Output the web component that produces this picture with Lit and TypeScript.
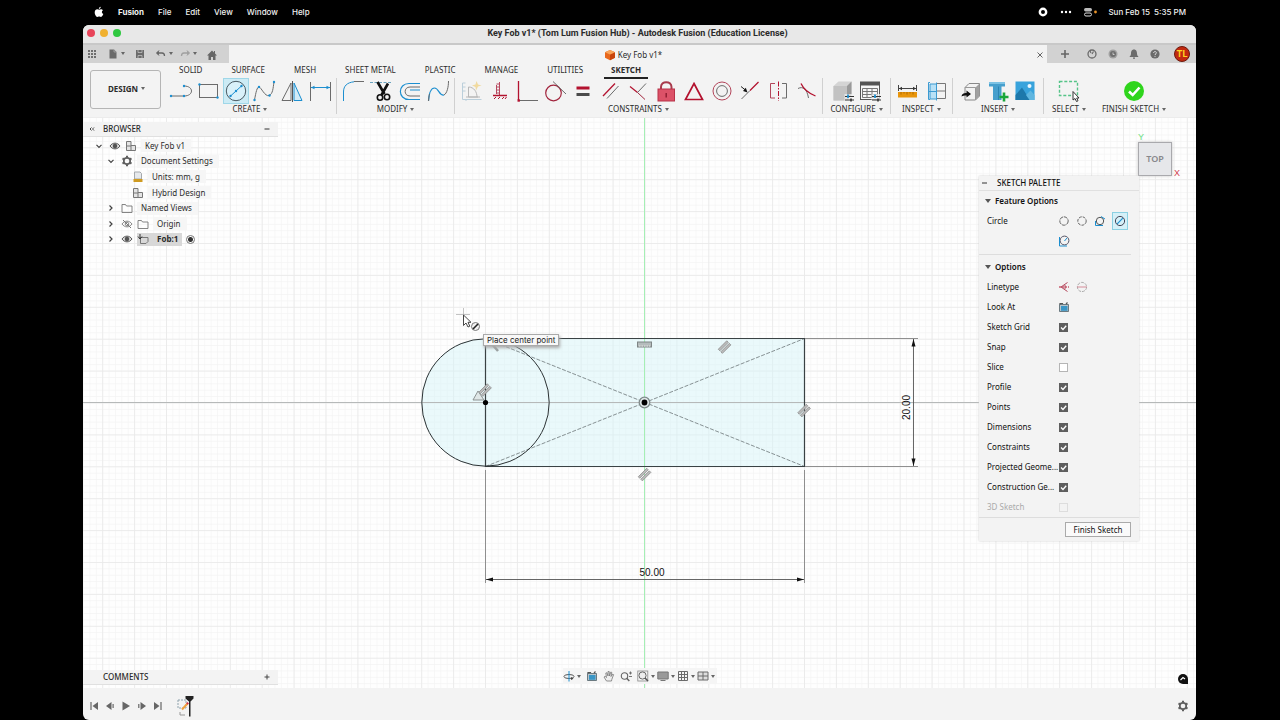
import { LitElement, html, svg, css, nothing } from "lit";
import { customElement, state } from "lit/decorators.js";
import { classMap } from "lit/directives/class-map.js";

const B = "#1c8fd0";
const G = "#6b6b6b";
const R = "#b3122f";

const dot = (x: number, y: number, c = B) => svg`<circle cx=${x} cy=${y} r="1.2" fill=${c}/>`;

const glyphs: Record<string, unknown> = {
  line: svg`<path d="M4 18H17C27 18 27 8 17 8" stroke=${G}/>${dot(4, 18)}${dot(17, 18)}${dot(17, 8)}`,
  rect: svg`<rect x="4.500" y="6.500" width="18" height="13" stroke=${G}/>${dot(4.5, 6.5)}${dot(22.5, 19.5)}`,
  circle: svg`<circle cx="13" cy="13" r="9.700" stroke="#4a5a63" fill="#d9f1fa"/><path d="M7 18.500L19 7.500" stroke=${B}/>${dot(7.5, 18)}${dot(13, 13)}${dot(18.5, 8)}`,
  spline: svg`<path d="M3.500 22C5 14 6 9 8 9S14 19 18 17.500S22 10 23 4" stroke=${G}/>${dot(3.5, 22)}${dot(8, 9)}${dot(18.5, 17.5)}${dot(23, 4)}`,
  mirror: svg`<path d="M12 5V22.500H3Z" stroke=${G}/><path d="M15 5V22.500H23Z" stroke=${B} fill="#d3ecf8"/><path d="M13.500 3V24" stroke="#555"/>`,
  dimension: svg`<path d="M3.500 4V23M23.500 4V23" stroke=${G}/><path d="M4 9.500H23" stroke=${B}/><path d="M4 9.500l3.500-1.800v3.600zM23 9.500l-3.500-1.800v3.600z" fill=${B}/>`,
  fillet: svg`<path d="M3.500 23V14C3.500 8 7 4.500 14 3.800" stroke=${B}/><path d="M14 3.500H24" stroke=${G}/>`,
  trim: svg`<path d="M2 4.500H24" stroke="#6aa3bf" stroke-dasharray="3 1.500"/><path d="M9.500 4L16.500 16M20 5.500L13.500 17" stroke="#111" stroke-width="2.600"/><circle cx="12" cy="19.500" r="2.700" stroke="#111" stroke-width="1.600"/><circle cx="19" cy="19" r="2.700" stroke="#111" stroke-width="1.600"/>`,
  offset: svg`<path d="M23 5.500H12C0.500 5.500 0.500 21.500 12 21.500H23M23 12H13" stroke=${B} stroke-width="1.200"/><path d="M23 9H13C6.500 9 6.500 18 13 18H23" stroke=${G}/>`,
  blend: svg`<path d="M3.500 23C4 16 6 10 9.500 10C14 10 14 18 19 17" stroke=${B} stroke-width="1.200"/><path d="M3.500 23C3.700 20 4 18 4.500 16M19 17C22 15.500 23.500 9 23.500 3" stroke=${G}/>`,
  autoc: svg`<g opacity=".55"><path d="M4.500 5V21.500H23.500M4.500 5h3M4.500 9h3M4.500 13h3M8 21v2" stroke="#8fb3c8"/><path d="M10.500 9V19H20M10.500 9C16 9 19 14 19 19M8 19h14" stroke="#888"/><path d="M18.500 3l1.500 3.500 3.500 1-3.500 1-2 4-.5-3.600-3.500-1.400 3.500-1z" fill="#f0c75b"/></g>`,
  fixhv: svg`<path d="M13.500 4V17M10.500 7v9M10.500 6h3M10.500 9h3M10.500 12h3M10.500 15h3" stroke="#b84a60"/><path d="M7 17.500H21" stroke=${R} stroke-width="1.600"/><path d="M8 21l2-2M12 21l2-2M16 21l2-2M19 21l1.500-2" stroke=${R}/>`,
  perp: svg`<path d="M4.500 3V22" stroke=${R} stroke-width="1.300"/><path d="M5 22.500H24" stroke=${G}/><rect x="3.500" y="21.300" width="2.400" height="2.400" fill=${R}/>`,
  tangent: svg`<circle cx="11.500" cy="15" r="7.800" stroke="#a2263e" stroke-width="1.200"/><path d="M11 3.500L24 16" stroke=${G}/>`,
  equal: svg`<rect x="6.500" y="8.500" width="13" height="3" fill=${R}/><rect x="6.500" y="15" width="13" height="3" fill="#4b4b4b"/>`,
  parallel: svg`<path d="M9 20.500L20.500 8" stroke=${G}/><path d="M5 18L17 5.500" stroke=${R} stroke-width="1.300"/>`,
  midpt: svg`<path d="M5 8.500L12.500 14.500" stroke=${R} stroke-width="1.200"/><path d="M12.500 14.500L20 21.500" stroke="#a2263e"/><path d="M21 5.500L12.500 14.500" stroke=${G}/>`,
  lock: svg`<path d="M8 12V9C8 2.500 18.500 2.500 18.500 9V12" stroke="#a83a4c" stroke-width="2"/><rect x="5" y="11" width="16.500" height="12" fill="#dc5268" stroke="#b83248"/><path d="M13.200 15v4.500" stroke="#8d1b2f" stroke-width="1.400"/>`,
  tri: svg`<path d="M13 5.500L21.500 21.500H4.500Z" stroke=${R} stroke-width="1.700"/>`,
  concentric: svg`<circle cx="13" cy="13" r="9" stroke="#b3455a"/><circle cx="13" cy="13" r="5.400" stroke=${G}/>`,
  collinear: svg`<path d="M4.500 21L13 12.500" stroke=${G}/><path d="M13 12.500L21.500 4" stroke=${R} stroke-width="1.200"/><path d="M4 8.500l5 4" stroke="#222"/><path d="M10.500 14.500l-4.500-1.500 2.800-3.200z" fill="#111"/>`,
  symmetry: svg`<path d="M10 5.500H5.500V20H10" stroke="#b3455a"/><path d="M17 5.500H21.500V20H17" stroke=${G}/><path d="M13.500 3.500V23" stroke=${R} stroke-dasharray="5 1.500 1.500 1.500"/>`,
  curvature: svg`<path d="M5 10.500C10 8 14 11 15.500 20" stroke=${G}/><path d="M8 5.500C11 12 15 15 22.500 18" stroke=${R} stroke-width="1.300"/>`,
  config: svg`<path d="M3.500 8L8.500 3.500H21.500V17L17 22.500H3.500Z" fill="#d4d4d4"/><path d="M3.500 8H17V22.500H3.500Z" fill="#c2c2c2"/><path d="M17 8L21.500 3.500V17L17 22.500Z" fill="#9a9a9a"/><rect x="14.500" y="16" width="10" height="8" fill="#f3f3f3" fill-opacity=".7"/><path d="M15 18.500h9M15 22h9" stroke="#333"/><path d="M18 16.500v3.500" stroke=${B} stroke-width="1.800"/><path d="M21 20.500v3" stroke="#333" stroke-width="1.600"/>`,
  table: svg`<rect x="3.500" y="4.500" width="19" height="17" stroke="#555" fill="#f7f7f7"/><rect x="3" y="3.500" width="20" height="4" fill="#555"/><path d="M5.500 10.500H20.500V19.500H5.500zM5.500 13.500H20.500M5.500 16.500H20.500M10 10.500v9M15 10.500v9" stroke="#777"/><rect x="14.500" y="16" width="10" height="8" fill="#f3f3f3" fill-opacity=".7"/><path d="M15 18.500h9M15 22h9" stroke="#333"/><path d="M18 16.500v3.500" stroke=${B} stroke-width="1.800"/><path d="M21 20.500v3" stroke="#333" stroke-width="1.600"/>`,
  measure: svg`<path d="M4.500 7v6M22.500 7v6M5 10.500H22" stroke="#444"/><path d="M5 10.500l3-1.800v3.600zM22 10.500l-3-1.800v3.600z" fill="#333"/><rect x="4" y="14" width="19" height="5.500" fill="#e8950c"/><path d="M7 14v2.500M10 14v1.500M13 14v2.500M16 14v1.500M19 14v2.500" stroke="#a25f00" stroke-width=".8"/>`,
  interfer: svg`<rect x="7" y="6" width="7" height="15" fill="#b9e1f6"/><path d="M7 4.500H5.500V21.500H7M13.500 4.500v18M5.500 13.500H14M14 6H7v15h7" stroke="#3c9bd2"/><path d="M14 5.500H22.500V20.500H14M14 13H22.500" stroke="#777"/>`,
  insert: svg`<path d="M7 9.500L11 5.500H21.500V18L17.500 22H7Z" fill="#f2f2f2" stroke="#888"/><path d="M17.500 9.500L21.500 5.500V18L17.500 22Z" fill="#a0a0a0"/><path d="M7 9.500H17.500V22" stroke="#999"/><path d="M3.500 18.500C4 15.500 6 15 8.500 15V12.500L13 16 8.500 19.500V17.500C6 17.500 5 17.500 3.500 18.500Z" fill="#111"/>`,
  mcm: svg`<path d="M4 4H20V8.500H16.500V22H8V8.500H4Z" fill="#469fcd"/><path d="M4 4H20V6H4z" fill="#7cc2e4"/><path d="M13.500 8.500V22" stroke="#2c84b2"/><path d="M19 14.500v9M14.500 19h9" stroke="#18a63b" stroke-width="2.600"/>`,
  image: svg`<rect x="3.500" y="3.500" width="19" height="18.500" fill="#38a3dc"/><path d="M3.500 17L10 9.500L18 22H3.500Z" fill="#1d78ab"/><path d="M14 17L18.500 12.500L22.500 17V22H17.500Z" fill="#5fb6e0"/><circle cx="17.500" cy="8" r="2" fill="#e9f7ff"/>`,
  select: svg`<rect x="3.500" y="3.500" width="18" height="14" stroke="#55c488" stroke-width="1.400" stroke-dasharray="3 1.800"/><path d="M17 13.500V22L19 20.500L20.500 23.500L22 22.800L20.700 20H23Z" fill="#fff" stroke="#333"/>`,
  finish: svg`<circle cx="13" cy="13" r="10" fill="#2fd51c"/><path d="M8 13.500L11.700 17L18.500 9.500" stroke="#fff" stroke-width="2.600"/>`,
};

const tool = (n: string) => svg`<svg class="tool" viewBox="0 0 26 26" fill="none" aria-hidden="true">${glyphs[n]}</svg>`;

const small: Record<string, unknown> = {
  grid: svg`<path d="M2 2h2v2H2zM5 2h2v2H5zM8 2h2v2H8zM2 5h2v2H2zM5 5h2v2H5zM8 5h2v2H8zM2 8h2v2H2zM5 8h2v2H5zM8 8h2v2H8z" fill="#6e6e6e"/>`,
  file: svg`<path d="M2.500 1.500H7L9.500 4V10.500H2.500Z" fill="#6b6b6b"/><path d="M7 1.500V4H9.500" stroke="#bbb" stroke-width=".6"/>`,
  save: svg`<path d="M2 2H10V10H2Z" fill="#6b6b6b"/><path d="M4 2v2.500h4V2M4 10V7.500h4V10" stroke="#ccc" stroke-width=".7"/>`,
  undo: svg`<path d="M4 2.500L1.500 5L4 7.500" fill="#777" stroke="#666"/><path d="M2 5H7C9 5 9.500 6.500 9.500 8" stroke="#666" stroke-width="1.300"/>`,
  redo: svg`<path d="M8 2.500L10.500 5L8 7.500" fill="#a5a5a5" stroke="#a0a0a0"/><path d="M10 5H5C3 5 2.500 6.500 2.500 8" stroke="#a0a0a0" stroke-width="1.300"/>`,
  home: svg`<path d="M6 2.500L1 7.500H2.500V12H5V9H7V12H9.500V7.500H11L9 5.500V3H8V4.500Z" fill="#666"/>`,
  ext: svg`<circle cx="6" cy="6" r="4" stroke="#6b6b6b" stroke-width="1.300"/><path d="M6 6L7.500 3.500M4 3l1 2" stroke="#6b6b6b" stroke-width="1.200"/>`,
  job: svg`<circle cx="6" cy="6" r="4.500" fill="#a0a0a0"/><circle cx="6" cy="6" r="3" fill="#6f6f6f"/><path d="M6 4.500V6.500H7.500" stroke="#ddd" stroke-width=".8"/>`,
  bell: svg`<path d="M6 1.500C8.500 1.500 9 4 9 5.500C9 7.500 10 8 10.500 9H1.500C2 8 3 7.500 3 5.500C3 4 3.500 1.500 6 1.500ZM5 9.500H7V10.800H5Z" fill="#6b6b6b"/>`,
  help: svg`<circle cx="6" cy="6" r="4.600" fill="#6b6b6b"/><path d="M4.600 5C4.600 3 7.500 3.200 7.400 4.900C7.300 5.900 6 5.900 6 7M6 7.900V8.900" stroke="#ddd" stroke-width="1"/>`,
  cube: svg`<path d="M6 1L11 3.200V8.800L6 11.200L1 8.800V3.200Z" fill="#e8681c"/><path d="M6 5.500L11 3.200V8.800L6 11.200Z" fill="#c8450c"/><path d="M6 1L11 3.200L6 5.500L1 3.200Z" fill="#f8a45a"/>`,
  eye: svg`<path d="M1 6C3.500 2.200 8.500 2.200 11 6C8.500 9.800 3.500 9.800 1 6Z" stroke="#555" fill="#ddd"/><circle cx="6" cy="6" r="2.300" fill="#555"/>`,
  eyeoff: svg`<path d="M1 6C3.500 2.200 8.500 2.200 11 6C8.500 9.800 3.500 9.800 1 6Z" stroke="#888"/><circle cx="6" cy="6" r="1.800" stroke="#888"/><path d="M2 2L10 10" stroke="#777"/>`,
  comp: svg`<path d="M1.500 1.500H6V10.500H1.500ZM1.500 6H6M6 5.500H10.500V10.500H6" stroke="#777" fill="#e4e4e4"/>`,
  gear: svg`<circle cx="6" cy="6" r="3.200" stroke="#5f5f5f" stroke-width="1.700"/><path d="M6 .8V2.600M6 9.400V11.200M1.500 3.400L3 4.300M9 7.700L10.500 8.600M1.500 8.600L3 7.700M9 4.300L10.500 3.400" stroke="#5f5f5f" stroke-width="2"/>`,
  units: svg`<path d="M2.500 1H8L9.500 2.500V8H2.500Z" fill="#e6e9ec" stroke="#a5a9ad"/><rect x="1.500" y="8" width="9" height="3" fill="#cf9b22"/>`,
  folder: svg`<path d="M1 2.500H4.500L5.500 4H11V10.500H1Z" stroke="#777" stroke-width=".9"/>`,
  body: svg`<path d="M3.500 4.500H11V8.500L9 10.500H3.500Z" stroke="#777"/><path d="M3 1V6M1 3.500L3 6L5 3.500" stroke="#333"/>`,
  right: svg`<path d="M4.500 3.500L7 6L4.500 8.500" stroke="#444" stroke-width="1.200"/>`,
  down: svg`<path d="M3.500 4.800L6 7.300L8.500 4.800" stroke="#444" stroke-width="1.200"/>`,
  c1: svg`<circle cx="6" cy="6" r="4.200" stroke="#666" stroke-dasharray="4 .8"/>`,
  c2: svg`<circle cx="6" cy="6" r="4.200" stroke="#666" stroke-dasharray="3 1"/>`,
  c3: svg`<circle cx="6" cy="6" r="3.700" stroke="#555"/><path d="M1.500 6V10.500H9M7 1.500L11 4" stroke=${B}/>`,
  c4: svg`<circle cx="6" cy="6" r="4.600" stroke="#445" fill="#d5f0f8"/><path d="M3.200 8.800L8.800 3.200" stroke=${B} stroke-width="1.200"/>`,
  c5: svg`<circle cx="6.500" cy="5.500" r="4.400" stroke="#556"/><path d="M1.500 2V11H9M6.500 6L9 3" stroke=${B}/>`,
  lt1: svg`<path d="M1 6H11" stroke=${R} stroke-dasharray="2 1"/><path d="M9.500 1.500L3 6L9.500 10.500M7 4v4" stroke="#b3455a"/>`,
  lt2: svg`<circle cx="6" cy="6" r="4.600" stroke="#aaa" stroke-dasharray="3 1"/><path d="M1 6H11" stroke="#d58c99"/>`,
  look: svg`<path d="M1.500 3.500H10.500V10.500H1.500Z" fill="#b9c4ca" stroke="#5f6e76" stroke-width=".9"/><rect x="3" y="5" width="6.500" height="4.800" fill="#3a96c6"/><path d="M2 3.500V2.500H4.500V3M8 3L9.500 1.500" stroke="#555" stroke-width="1.200"/>`,
  orbit: svg`<ellipse cx="6" cy="6.500" rx="5" ry="2" stroke="#555"/><path d="M6 1V11.500" stroke=${B}/><path d="M8 7l2.500 1.800L8 10z" fill="#444"/>`,
  hand: svg`<path d="M3.500 11L1 7L2.200 6.300L3.500 7.500L2.800 3L3.800 2.700L5 6L5 1.500L6.200 1.500L6.500 6L7.800 2L8.800 2.400L8 6.500L9.800 4L10.600 4.600L8.800 9.500L8.500 11Z" fill="#eee" stroke="#777" stroke-width=".8"/>`,
  zoom: svg`<circle cx="4.500" cy="6" r="3.200" stroke="#666" stroke-width="1.100"/><path d="M6.700 8.200L9.300 11" stroke="#666" stroke-width="1.500"/><path d="M9 3h3M10.500 1.500v3M9 6.500h3" stroke="#666" stroke-width=".9"/>`,
  fit: svg`<rect x=".8" y="1" width="10" height="10" stroke="#888" stroke-width=".8"/><circle cx="5.500" cy="5.500" r="3.600" stroke="#666" fill="#eee"/><path d="M8 8L11 11" stroke="#555" stroke-width="1.500"/>`,
  display: svg`<path d="M.8 2H11.200V9H.8Z" fill="#9a9a9a" stroke="#777"/><path d="M3.500 10.500h5" stroke="#777"/>`,
  gridv: svg`<path d="M1.500 1.500h9v9h-9zM4.500 1.500v9M7.500 1.500v9M1.500 4.500h9M1.500 7.500h9" stroke="#6b6b6b"/>`,
  views: svg`<path d="M1 2h10v8H1zM6 2v8M1 6h10" stroke="#6b6b6b" fill="#ddd"/>`,
  first: svg`<path d="M3 2v8" stroke="#666" stroke-width="1.200"/><path d="M10 2v8L4.500 6z" fill="#666"/>`,
  prev: svg`<path d="M7.500 2v8L2 6zM8.500 4h1.200v4H8.500z" fill="#666"/>`,
  play: svg`<path d="M2.500 1.500L10 6l-7.500 4.500z" fill="#666"/>`,
  next: svg`<path d="M4.500 2v8L10 6zM2.200 4h1.200v4H2.200z" fill="#666"/>`,
  last: svg`<path d="M9 2v8" stroke="#666" stroke-width="1.200"/><path d="M2 2v8L7.500 6z" fill="#666"/>`,
  close: svg`<path d="M3.500 3.500L8.500 8.500M8.500 3.500L3.500 8.500" stroke="#555" stroke-width=".9"/>`,
  plus: svg`<path d="M6 2v8M2 6h8" stroke="#666" stroke-width="1.600"/>`,
};

const ico = (n: string) => svg`<svg class="ico" viewBox="0 0 12 12" fill="none" aria-hidden="true">${small[n]}</svg>`;

interface Group { id: string; label: string; tools: string[]; active?: string }

const groups: Group[] = [
  { id: "create", label: "CREATE", tools: ["line", "rect", "circle", "spline", "mirror", "dimension"], active: "circle" },
  { id: "modify", label: "MODIFY", tools: ["fillet", "trim", "offset", "blend"] },
  { id: "constraints", label: "CONSTRAINTS", tools: ["autoc", "fixhv", "perp", "tangent", "equal", "parallel", "midpt", "lock", "tri", "concentric", "collinear", "symmetry", "curvature"] },
  { id: "configure", label: "CONFIGURE", tools: ["config", "table"] },
  { id: "inspect", label: "INSPECT", tools: ["measure", "interfer"] },
  { id: "insert", label: "INSERT", tools: ["insert", "mcm", "image"] },
  { id: "select", label: "SELECT", tools: ["select"] },
  { id: "finish", label: "FINISH SKETCH", tools: ["finish"] },
];

const tabs = ["SOLID", "SURFACE", "MESH", "SHEET METAL", "PLASTIC", "MANAGE", "UTILITIES", "SKETCH"];

const tree = [
  { depth: 0, icons: ["down", "eye", "comp"], text: "Key Fob v1" },
  { depth: 1, icons: ["down", "gear"], text: "Document Settings" },
  { depth: 3, icons: ["units"], text: "Units: mm, g" },
  { depth: 3, icons: ["comp"], text: "Hybrid Design" },
  { depth: 1, icons: ["right", "folder"], text: "Named Views" },
  { depth: 1, icons: ["right", "eyeoff", "folder"], text: "Origin" },
  { depth: 1, icons: ["right", "eye"], text: "Fob:1", active: true },
];

@customElement("app-root")
export class AppRoot extends LitElement {
  @state() private options = [
    { label: "Sketch Grid", on: true },
    { label: "Snap", on: true },
    { label: "Slice", on: false },
    { label: "Profile", on: true },
    { label: "Points", on: true },
    { label: "Dimensions", on: true },
    { label: "Constraints", on: true },
    { label: "Projected Geome...", on: true },
    { label: "Construction Ge...", on: true },
    { label: "3D Sketch", on: false, disabled: true },
  ];

  static styles = css`
    :host { display: flex; flex-direction: column; height: 100vh; padding: 0 84px 0 83px; box-sizing: border-box; background: #000; color: #2b2b2b; font: 8px/12px "Noto Sans", sans-serif; }
    * { box-sizing: border-box; }
    button { font: inherit; color: inherit; background: none; border: 0; padding: 0; display: inline-flex; align-items: center; justify-content: center; }
    ul { list-style: none; margin: 0; padding: 0; }
    .ico { width: 12px; height: 12px; flex: none; display: block; }
    .tool { width: 26px; height: 26px; display: block; }
    .caret { width: 0; border: 2px solid transparent; border-top: 3px solid #666; border-bottom: 0; flex: none; margin-left: 3px; }
    .menubar { display: flex; align-items: center; height: 25px; flex: none; padding: 0 10px 2px 11px; color: #f2f2f2; font: 500 8px/12px Inter, sans-serif; }
    .menubar nav { display: flex; gap: 14px; flex: 1; align-items: center; }
    .menubar button { font-weight: 500; }
    .menubar .app { font-weight: 700; }
    .apple { width: 10px; height: 12px; display: block; }
    .status { display: flex; align-items: center; gap: 8px; }
    .window { flex: 1; min-height: 0; display: flex; flex-direction: column; background: #f3f3f3; border-radius: 6px; overflow: hidden; }
    .title { display: flex; align-items: center; height: 18px; flex: none; background: #e8e8e8; padding: 0 4px 2px; }
    .title h1 { flex: 1; margin: 0; text-align: center; padding-right: 38px; font: 700 9px/14px Roboto, sans-serif; color: #2b2b2b; }
    .lights { display: flex; gap: 5px; }
    .light { width: 8px; height: 8px; border-radius: 50%; }
    .red { background: #e8455a; } .amber { background: #f0b02f; } .green { background: #2fc840; }
    .tabbar { display: flex; height: 20px; flex: none; background: #d2d2d2; border-top: 2px solid #c8c8c8; }
    .quick { width: 146px; display: flex; align-items: center; padding-left: 3px; }
    .quick button { margin-right: 9px; }
    .quick .tight { margin-right: 6px; }
    .quick, .tray { padding-bottom: 1px; }
    .doc { flex: 1; display: flex; align-items: center; justify-content: center; background: #f3f3f3; padding: 1px 1px 0 3px; }
    .doc .name { flex: 1; display: flex; justify-content: center; align-items: center; gap: 2px; }
    .tray { width: 149px; display: flex; align-items: center; gap: 9px; padding-left: 12px; }
    .tray .new { margin-right: 6px; }
    .avatar { width: 16px; height: 16px; border-radius: 50%; background: #c22a10; border: 1px solid #6d1a0e; color: #ffd61f; font: 700 9px/14px Inter, sans-serif; text-align: center; margin-left: 4px; }
    .ribbon { display: flex; height: 55px; flex: none; border-bottom: 1px solid #ececec; padding-left: 7px; }
    .design { width: 71px; height: 39px; margin-top: 7px; border: 1px solid #b5b5b5; border-radius: 3px; font-weight: 700; flex: none; padding: 0 0 2px 2px; }
    .work { flex: 1; min-width: 0; padding-left: 3px; }
    .tabs { display: flex; gap: 29px; padding-left: 15px; height: 15px; }
    .tabs button { height: 14px; align-items: center; }
    .tabs .on { font-weight: 700; border-bottom: 2px solid #222; padding: 0 7px; margin: 0 -8px; height: 16px; }
    .groups { display: flex; height: 38px; }
    .group { display: flex; flex-direction: column; align-items: center; border-right: 1px solid #d0d0d0; height: 36px; padding: 0 2px; flex: none; }
    .row { display: flex; width: 100%; justify-content: space-around; height: 26px; }
    .row button { width: 26px; height: 26px; }
    .row .active { background: #ccebf5; box-shadow: inset 0 0 0 1px #9fd7e8; }
    .label { height: 10px; line-height: 10px; }
    .create { width: 173px; } .modify { width: 118px; } .constraints { width: 368px; }
    .configure { width: 68px; padding: 0 6px; } .inspect { width: 62px; } .insert { width: 91px; padding: 0 4px; }
    .select { width: 50px; border: 0; } .finish { width: 80px; border: 0; }
    .canvas { position: relative; flex: 1; min-height: 0; background: #fefefe; }
    .drawing { position: absolute; inset: 0; width: 100%; height: 100%; display: block; }
    .drawing text { font: 10px "Liberation Sans", Arial, sans-serif; fill: #111; }
    .browser { position: absolute; left: 0; top: 4px; width: 195px; }
    .bar { display: flex; align-items: center; background: #f3f3f3; height: 15px; border-bottom: 1px solid #e0e0e0; }
    .bar b { font-weight: 500; flex: 1; }
    .browser .bar { padding: 0 5px 0 3px; gap: 5px; }
    .tree { display: flex; flex-direction: column; height: 109px; margin-top: 1px; }
    .tree li { flex: 1; display: flex; align-items: center; gap: 4px; }
    .tree .text { display: flex; align-items: center; height: 13px; background: #f6f6f6; padding: 0 6px 0 4px; }
    .d0 { padding-left: 10px; } .d1 { padding-left: 22px; } .d3 { padding-left: 49px; }
    .tree .picked { background: #d8d8d8; font-weight: 700; padding: 0 4px 0 0; gap: 8px; }
    .tree .radio { appearance: none; width: 9px; height: 9px; margin: 0; border-radius: 50%; border: 1px solid #777; background: radial-gradient(#333 0 2px, #fff 3px); }
    .comments { position: absolute; left: 0; bottom: 3px; width: 195px; padding: 0 5px 0 20px; }
    .nav { position: absolute; left: 480px; bottom: 4px; display: flex; height: 16px; align-items: center; background: #f5f5f5; }
    .nav button { margin-right: 5px; }
    .nav .menu { margin-right: 2px; }
    .nav .first { margin-right: 5px; }
    .nav .caret, .quick .caret { margin-left: 2px; }
    .cube { position: absolute; right: 24px; top: 24px; width: 34px; height: 34px; background: #e6e7ea; border: 1px solid #a9a9ad; box-shadow: 0 0 3px #c8c8c8; color: #88888c; font: 600 9px/32px "Noto Sans", sans-serif; text-align: center; }
    .axis-y, .axis-x { position: absolute; font: 9px/10px "Liberation Sans", sans-serif; }
    .axis-y { right: 52px; top: 14px; color: #6be082; }
    .axis-x { right: 16px; top: 50px; color: #d23c4f; }
    .palette { position: absolute; right: 57px; top: 58px; width: 160px; background: #f3f3f3; box-shadow: 0 0 2px #ccc; color: #111; }
    .palette .bar { padding-left: 0; gap: 6px; }
    .palette h2 { margin: 0; font: 600 8px/20px "Noto Sans", sans-serif; padding-left: 6px; display: flex; align-items: center; gap: 4px; }
    .palette h2::before { content: ""; border: 3px solid transparent; border-top: 4px solid #555; border-bottom: 0; }
    .opt { display: flex; align-items: center; height: 20px; padding-left: 8px; }
    .opt .name { width: 71px; white-space: nowrap; flex: none; }
    .opt .kinds { display: flex; gap: 6px; }
    .kinds button { width: 12px; height: 20px; }
    .kinds .active { width: 16px; height: 18px; background: #d5f0f8; box-shadow: inset 0 0 0 1px #8bd0e2; margin: 1px 0; }
    .opts { border-top: 1px solid #ddd; margin: 3px 8px 0 0; padding-top: 2px; }
    .opt input { appearance: none; width: 9px; height: 9px; margin: 0 0 0 1px; border: 1px solid #b5b5b5; background: #fff; }
    .opt input:checked { border-color: #5e5e5e; background: #5e5e5e; }
    .check { position: relative; display: block; height: 9px; }
    .check input { display: block; }
    .check svg { position: absolute; left: 1px; top: 0; width: 9px; height: 9px; pointer-events: none; }
    .off { color: #aaa; } .opt.off input { border-color: #ddd; background: #f3f3f3; }
    .foot { border-top: 1px solid #ddd; display: flex; justify-content: flex-end; padding: 4px 8px; }
    .foot button { width: 66px; height: 15px; border: 1px solid #aaa; background: #fafafa; }
    .tip { position: absolute; left: 400px; top: 216px; padding: 0 3px; height: 12px; background: #f8f8f8; border: 1px solid #aaa; box-shadow: 1px 2px 3px #aaa; font: 8px/10px Inter, sans-serif; color: #222; }
    .chat { position: absolute; right: 8px; bottom: 4px; width: 10px; height: 10px; border-radius: 50% 50% 0 50%; background: #111; }
    .timeline { height: 32px; flex: none; display: flex; align-items: center; padding: 4px 7px 0 5px; }
    .timeline button { margin-right: 4px; }
    .feature { display: block; width: 22px; height: 24px; margin-left: 4px; }
    .spacer { flex: 1; }
  `;

  private toggle(i: number) {
    this.options = this.options.map((o, n) => (n === i ? { ...o, on: !o.on } : o));
  }

  private caret() {
    return html`<span class="caret"></span>`;
  }

  private drawing() {
    const hatch = (x: number, y: number) => svg`<g transform="translate(${x} ${y}) rotate(-45)"><rect x="-6" y="-2.800" width="12" height="2.200" fill="#bbb" stroke="#888" stroke-width=".7"/><rect x="-6" y=".8" width="12" height="2.200" fill="#bbb" stroke="#888" stroke-width=".7"/></g>`;
    return html`<svg class="drawing" viewBox="83 118 1113 570" preserveAspectRatio="xMidYMid slice" fill="none" role="img" aria-label="Sketch">
      <defs>
        <pattern id="minor" x="644.5" y="402.5" width="6.38" height="6.38" patternUnits="userSpaceOnUse"><path d="M0 0H6.380M0 0V6.380" stroke="#f3f3f3" stroke-width="1.2"/></pattern>
        <pattern id="major" x="644.5" y="402.5" width="31.9" height="31.9" patternUnits="userSpaceOnUse"><path d="M0 0H31.900M0 0V31.900" stroke="#e9e9e9" stroke-width="1.6"/></pattern>
      </defs>
      <rect x="0" y="0" width="1280" height="800" fill="url(#minor)"/>
      <rect x="0" y="0" width="1280" height="800" fill="url(#major)"/>
      <path d="M485.500 338.500H804.500V466.500H485.500A64 64 0 0 1 485.500 338.500Z" fill="#d6f4f8" fill-opacity=".5"/>
      <path d="M0 402.500H1280" stroke="#b6b9b9"/>
      <path d="M644.500 0V800" stroke="#a5efb5"/>
      <path d="M485.500 338.500L804.500 466.500M485.500 466.500L804.500 338.500" stroke="#7a8587" stroke-width=".9" stroke-dasharray="4 1.500"/>
      <path d="M485.500 338.500H804.500V466.500H485.500Z" stroke="#3a4244" stroke-width="1.2"/>
      <circle cx="485.500" cy="402.500" r="63.700" stroke="#2c3234"/>
      <path d="M485.500 470V583M804.500 470V583M805 338.500H918M805 466.500H918" stroke="#8f8f8f"/>
      <path d="M486 579.500H804M913.500 339V466" stroke="#555" stroke-width=".9"/>
      <path d="M486 579.500l7-2v4zM804 579.500l-7-2v4zM913.500 339l-2 7.500h4zM913.500 466l-2-7.500h4z" fill="#111"/>
      <text x="652" y="575.500" text-anchor="middle">50.00</text>
      <text transform="translate(909.5 407.500) rotate(-90)" text-anchor="middle">20.00</text>
      <circle cx="485.500" cy="402.500" r="2.600" fill="#000"/>
      <circle cx="644.500" cy="402.500" r="5.300" fill="#dde6e6" stroke="#7f8a8a" stroke-width="1.3"/>
      <circle cx="644.500" cy="402.500" r="2.900" fill="#000"/>
      ${hatch(724.5, 347)}${hatch(804, 410.5)}${hatch(644.5, 474.5)}${hatch(485, 390)}
      <path d="M478 391L473 400H484Z" fill="#dfe7e7" stroke="#8d9393"/>
      <rect x="637.500" y="342" width="14" height="5" fill="#b5bcbc" stroke="#7f8585"/><path d="M639 346H650" stroke="#e5e5e5" stroke-dasharray="1.500 1"/>
      <path d="M491 343L498 351" stroke="#9aa0a0" stroke-width="2.5"/>
      <path d="M456 314.500H470M463.500 308V320" stroke="#c3c3c3"/>
      <path d="M463.500 315V325.500L466 323L468 327L469.800 326.200L468 322.300H471Z" fill="#fff" stroke="#333" stroke-width=".9"/>
      <circle cx="475.500" cy="326.500" r="4" fill="#f2f2f2" stroke="#777"/><path d="M473 329L478 324" stroke="#222" stroke-width="1.6"/>
    </svg>`;
  }

  render() {
    const menu = (n: string, cls = "menu") => html`<button class=${cls} aria-label=${n}>${ico(n)}${this.caret()}</button>`;
    const plain = (n: string, cls = "") => html`<button class=${cls} aria-label=${n}>${ico(n)}</button>`;
    return html`
      <header class="menubar">
        <nav>
          <svg class="apple" viewBox="0 0 10 12" aria-hidden="true"><path d="M6.800.8C6.800 2 6 2.900 4.900 2.900C4.800 1.800 5.700.9 6.800.8ZM8.900 4.200C7.300 5.200 7.600 7.300 9.300 8C8.700 9.600 7.800 11 6.800 11C6.100 11 5.900 10.600 5.100 10.600C4.300 10.600 4 11 3.400 11C2.200 11 .7 8.500.7 6.500C.7 4.300 2 3.200 3.300 3.200C4.100 3.200 4.700 3.700 5.200 3.700C5.700 3.700 6.300 3.100 7.300 3.200C7.900 3.200 8.500 3.500 8.900 4.200Z" fill="#fff"/></svg>
          <button class="app">Fusion</button><button>File</button><button>Edit</button><button>View</button><button>Window</button><button>Help</button>
        </nav>
        <div class="status">
          <svg width="10" height="10" viewBox="0 0 10 10"><circle cx="5" cy="5" r="3.200" fill="none" stroke="#fff" stroke-width="2.400"/></svg>
          <svg width="20" height="10" viewBox="0 0 20 10" fill="#fff"><circle cx="6" cy="5" r="1.200"/><circle cx="10" cy="5" r="1.200"/><circle cx="14" cy="5" r="1.200"/></svg>
          <svg width="16" height="10" viewBox="0 0 16 10"><rect x="0" y="1" width="8" height="3.500" rx="1.700" fill="#bbb"/><rect x=".5" y="6" width="7" height="3" rx="1.500" fill="none" stroke="#ddd"/><circle cx="11.500" cy="5" r="1.400" fill="#e8932b"/></svg>
          <span>Sun Feb 15&nbsp; 5:35 PM</span>
        </div>
      </header>
      <main class="window">
        <div class="title">
          <div class="lights"><span class="light red"></span><span class="light amber"></span><span class="light green"></span></div>
          <h1>Key Fob v1* (Tom Lum Fusion Hub) - Autodesk Fusion (Education License)</h1>
        </div>
        <div class="tabbar">
          <div class="quick">${plain("grid")}${menu("file")}${plain("save")}${menu("undo", "tight")}${menu("redo")}${plain("home")}</div>
          <div class="doc"><span class="name">${ico("cube")}Key Fob v1*</span>${plain("close")}</div>
          <div class="tray">${plain("plus", "new")}${plain("ext")}${plain("job")}${plain("bell")}${plain("help")}<span class="avatar">TL</span></div>
        </div>
        <div class="ribbon">
          <button class="design">DESIGN ${this.caret()}</button>
          <div class="work">
            <div class="tabs">${tabs.map((t) => html`<button class=${classMap({ on: t === "SKETCH" })}>${t}</button>`)}</div>
            <div class="groups">
              ${groups.map((g) => html`<div class="group ${g.id}">
                <div class="row">${g.tools.map((t) => html`<button aria-label=${t} class=${classMap({ active: g.active === t })}>${tool(t)}</button>`)}</div>
                <button class="label">${g.label}${this.caret()}</button>
              </div>`)}
            </div>
          </div>
        </div>
        <section class="canvas">
          ${this.drawing()}
          <span class="axis-y">Y</span><span class="axis-x">X</span>
          <div class="cube">TOP</div>
          <aside class="browser">
            <div class="bar"><svg class="ico" viewBox="0 0 12 12" fill="none"><path d="M5.500 4.500L4 6L5.500 7.500M8 4.500L6.500 6L8 7.500" stroke="#444"/></svg><b>BROWSER</b><svg class="ico" viewBox="0 0 12 12"><path d="M3.500 6H8.500" stroke="#333"/></svg></div>
            <ul class="tree">
              ${tree.map((r) => html`<li class="d${r.depth}">${r.icons.map(ico)}<span class=${classMap({ text: true, picked: !!r.active })}>${r.active ? ico("body") : nothing}${r.text}</span>${r.active ? html`<input class="radio" type="radio" aria-label="Activate Fob:1" checked />` : nothing}</li>`)}
            </ul>
          </aside>
          <div class="bar comments"><b>COMMENTS</b><svg class="ico" viewBox="0 0 12 12"><path d="M3.500 6H8.500M6 3.500V8.500" stroke="#444"/></svg></div>
          <div class="nav">${menu("orbit", "first")}${plain("look")}${plain("hand")}${plain("zoom")}${menu("fit")}${menu("display")}${menu("gridv")}${menu("views")}</div>
          <aside class="palette">
            <div class="bar"><svg class="ico" viewBox="0 0 12 12"><path d="M3 6H8" stroke="#333"/></svg><b>SKETCH PALETTE</b></div>
            <h2>Feature Options</h2>
            <div class="opt"><span class="name">Circle</span><span class="kinds">${plain("c1")}${plain("c2")}${plain("c3")}${plain("c4", "active")}</span></div>
            <div class="opt"><span class="name"></span><span class="kinds">${plain("c5")}</span></div>
            <div class="opts">
              <h2>Options</h2>
              <div class="opt"><span class="name">Linetype</span><span class="kinds">${plain("lt1")}${plain("lt2")}</span></div>
              <div class="opt"><span class="name">Look At</span><span class="kinds">${plain("look")}</span></div>
              ${this.options.map((o, i) => html`<label class=${classMap({ opt: true, off: !!o.disabled })}><span class="name">${o.label}</span><span class="check"><input type="checkbox" .checked=${o.on} ?disabled=${o.disabled} @change=${() => this.toggle(i)} />${o.on ? svg`<svg viewBox="0 0 9 9" fill="none"><path d="M2 4.500L4 6.500L7.200 2.800" stroke="#fff" stroke-width="1.300"/></svg>` : nothing}</span></label>`)}
            </div>
            <div class="foot"><button>Finish Sketch</button></div>
          </aside>
          <div class="tip">Place center point</div>
          <svg class="chat" viewBox="0 0 10 10" fill="none"><path d="M2.500 6L5 3.500L7 5" stroke="#fff" stroke-width="1.200"/></svg>
        </section>
        <footer class="timeline">
          ${["first", "prev", "play", "next", "last"].map((n) => plain(n))}
          <svg class="feature" viewBox="0 0 22 24" fill="none"><rect x="6" y="6" width="8" height="8" stroke="#8fa3ad" stroke-dasharray="2 1"/><path d="M8 18v3h5" stroke="#999"/><path d="M10 15.500L15.500 9.500" stroke="#f0a13c" stroke-width="2"/><path d="M15 10l1.200-1.300" stroke="#d2304a" stroke-width="2"/><path d="M13.500 2H21.500V4.500L18.500 7.500V22.500H17V7.500L13.500 4.500Z" fill="#222"/></svg>
          <span class="spacer"></span>
          ${ico("gear")}
        </footer>
      </main>`;
  }
}
